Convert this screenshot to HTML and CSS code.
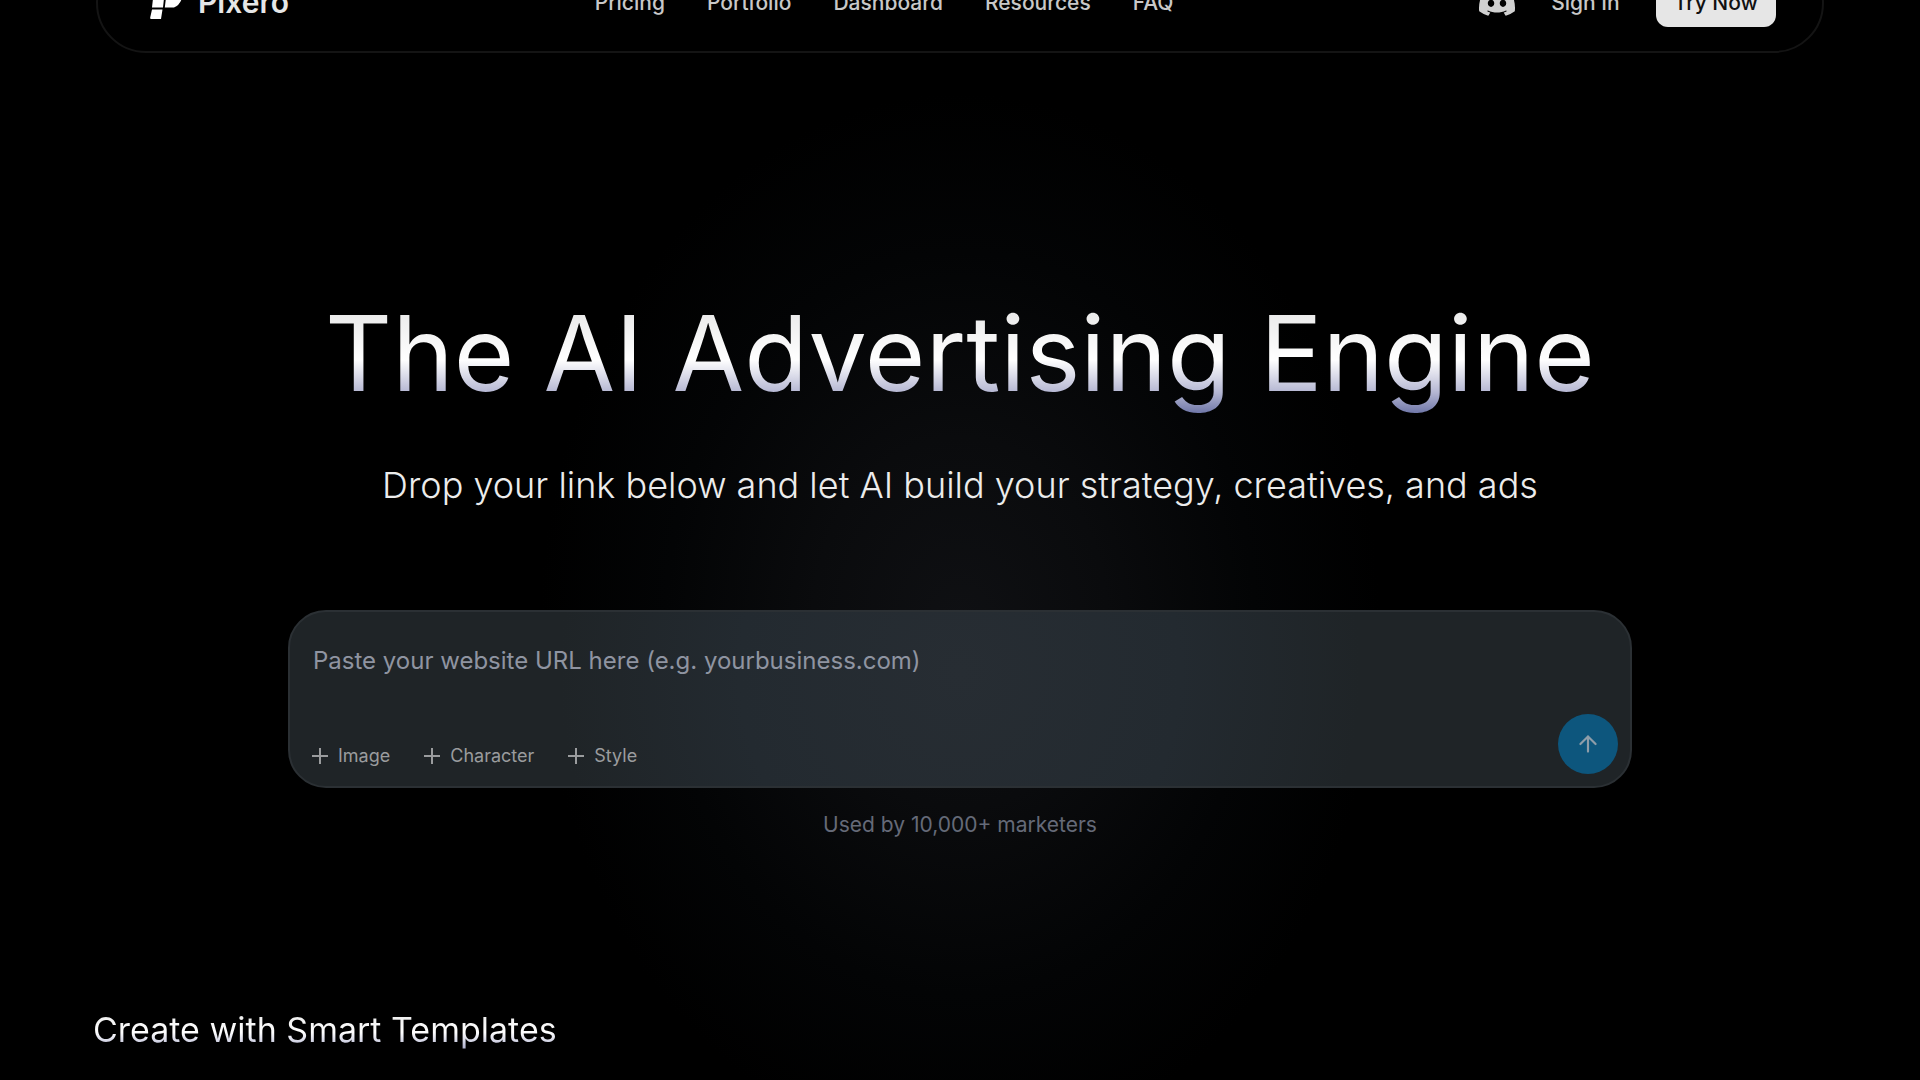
FILE: index.html
```html
<!DOCTYPE html>
<html lang="en">
<head>
    <meta charset="UTF-8">
    <meta name="viewport" content="width=device-width, initial-scale=1.0">
    <title>Pixero</title>
    <link rel="stylesheet" href="styles.css">
</head>
<body>
    <header class="navbar">
        <a class="logo" href="#">
            <svg class="logo-mark" viewBox="0 0 32 34" aria-hidden="true">
                <path d="M4.500 0H15.500L13 22.500H2Z M17.500 0H32V13Q30 20 24 22.500H14.800Z M2 24.500H12.500L11 34H1Q0 34 .2 32.500Z"/>
            </svg>
            <span>Pixero</span>
        </a>
        <nav class="nav-links">
            <a href="#">Pricing</a>
            <a href="#">Portfolio</a>
            <a href="#">Dashboard</a>
            <a href="#">Resources</a>
            <a href="#">FAQ</a>
        </nav>
        <div class="nav-actions">
            <a href="#" aria-label="Discord">
                <svg class="discord" viewBox="0 0 24 24" aria-hidden="true">
                    <path d="M20.317 4.370a19.791 19.791 0 0 0-4.885-1.515.074.074 0 0 0-.079.037c-.21.375-.444.864-.608 1.250a18.270 18.270 0 0 0-5.487 0 12.640 12.640 0 0 0-.617-1.250.077.077 0 0 0-.079-.037A19.736 19.736 0 0 0 3.677 4.370a.07.07 0 0 0-.032.027C.533 9.046-.32 13.580.099 18.057a.082.082 0 0 0 .031.057 19.900 19.900 0 0 0 5.993 3.030.078.078 0 0 0 .084-.028 14.090 14.090 0 0 0 1.226-1.994.076.076 0 0 0-.041-.106 13.107 13.107 0 0 1-1.872-.892.077.077 0 0 1-.008-.128 10.200 10.200 0 0 0 .372-.292.074.074 0 0 1 .077-.01c3.928 1.793 8.180 1.793 12.062 0a.074.074 0 0 1 .078.01c.12.098.246.198.373.292a.077.077 0 0 1-.006.127 12.299 12.299 0 0 1-1.873.892.077.077 0 0 0-.041.107c.36.698.772 1.362 1.225 1.993a.076.076 0 0 0 .084.028 19.839 19.839 0 0 0 6.002-3.030.077.077 0 0 0 .032-.054c.5-5.177-.838-9.674-3.549-13.660a.061.061 0 0 0-.031-.03zM8.020 15.330c-1.183 0-2.157-1.085-2.157-2.419 0-1.333.956-2.419 2.157-2.419 1.210 0 2.176 1.096 2.157 2.420 0 1.333-.956 2.418-2.157 2.418zm7.975 0c-1.183 0-2.157-1.085-2.157-2.419 0-1.333.955-2.419 2.157-2.419 1.210 0 2.176 1.096 2.157 2.420 0 1.333-.946 2.418-2.157 2.418z"/>
                </svg>
            </a>
            <a href="#">Sign In</a>
            <button class="try-btn" type="button">Try Now</button>
        </div>
    </header>

    <main>
        <section class="hero">
            <h1>The AI Advertising Engine</h1>
            <p class="subtitle">Drop your link below and let AI build your strategy, creatives, and ads</p>
            <form class="prompt">
                <input class="prompt-input" type="text" aria-label="Website URL" placeholder="Paste your website URL here (e.g. yourbusiness.com)">
                <div class="prompt-bar">
                    <div class="chips">
                        <button class="chip" type="button"><svg viewBox="0 0 16 16" aria-hidden="true"><path d="M8 0V16M0 8H16"/></svg>Image</button>
                        <button class="chip" type="button"><svg viewBox="0 0 16 16" aria-hidden="true"><path d="M8 0V16M0 8H16"/></svg>Character</button>
                        <button class="chip" type="button"><svg viewBox="0 0 16 16" aria-hidden="true"><path d="M8 0V16M0 8H16"/></svg>Style</button>
                    </div>
                    <button class="send-btn" type="button" aria-label="Generate">
                        <svg viewBox="0 0 24 24" aria-hidden="true"><path d="m5 12 7-7 7 7M12 19V5"/></svg>
                    </button>
                </div>
            </form>
            <p class="used-by">Used by 10,000+ marketers</p>
        </section>

        <section class="templates">
            <h2>Create with Smart Templates</h2>
        </section>
    </main>
</body>
</html>
```
FILE: styles.css
```css
* {
    box-sizing: border-box;
}

body {
    font-family: Inter, sans-serif;
    background: #000;
    color: #fff;
    margin: 0;
    padding: 0;
    overflow: hidden;
}

a {
    color: inherit;
    text-decoration: none;
}

button,
input {
    font-family: inherit;
}

/* the bar is tucked partly above the top edge */
.navbar {
    display: flex;
    align-items: center;
    justify-content: space-between;
    height: 100px;
    margin: -47px 5% 0;
    padding: 0 46px 2px 52px;
    border: 2px solid #141414;
    border-radius: 50px;
    color: #c8c8c8;
    font-size: 21px;
    font-weight: 500;
}

.logo {
    display: flex;
    align-items: center;
    gap: 16px;
    color: #e6e6e6;
    font-size: 30px;
    font-weight: 600;
}

.logo-mark {
    width: 32px;
    height: 34px;
    fill: #fff;
}

.nav-links {
    display: flex;
    gap: 42px;
}

.nav-actions {
    display: flex;
    align-items: center;
    gap: 36px;
}

.discord {
    display: block;
    width: 36px;
    height: 36px;
    fill: #d0d0d0;
}

.try-btn {
    height: 50px;
    padding: 0 18px;
    border: 0;
    border-radius: 12px;
    background: #e6e6e6;
    color: #111;
    font-size: 21px;
    font-weight: 500;
}

main {
    padding-bottom: 60px;
    background: radial-gradient(ellipse 420px 530px at 50% 570px, #0f1013 0%, #0a0b0d 35%, #030405 70%, #000 100%);
}

.hero {
    display: flex;
    flex-direction: column;
    align-items: center;
    padding: 234px 15% 0;
}

h1 {
    margin: 0;
    font-size: 104px;
    line-height: 132px;
    font-weight: 400;
    white-space: nowrap;
    background: linear-gradient(180deg, #e6e6e6 12%, #fff 55%, #b4b6d2 80%, #5c659c 100%);
    -webkit-background-clip: text;
    background-clip: text;
    color: transparent;
}

.subtitle {
    margin: 44px 0 0;
    color: #ececec;
    font-size: 36px;
    line-height: 44px;
    font-weight: 300;
    white-space: nowrap;
}

.prompt {
    width: 100%;
    margin-top: 103px;
    padding: 26px 12px 12px 22px;
    border: 2px solid #2b3034;
    border-radius: 38px;
    background: radial-gradient(ellipse 400px 420px at 50% 60px, #272d33 0%, #232a30 55%, #1f2427 100%);
}

.prompt-input {
    display: block;
    width: 100%;
    height: 44px;
    padding: 0 1px;
    border: 0;
    outline: 0;
    background: none;
    color: #fff;
    font-size: 24px;
}

.prompt-input::placeholder {
    color: #8f94a1;
    opacity: 1;
}

.prompt-bar {
    display: flex;
    justify-content: space-between;
    align-items: flex-end;
    margin-top: 32px;
}

.chips {
    display: flex;
    gap: 34px;
    padding-bottom: 6px;
}

.chip {
    display: flex;
    align-items: center;
    gap: 10px;
    padding: 0;
    border: 0;
    background: none;
    color: #9a9c9e;
    font-size: 18px;
    line-height: 24px;
}

.chip svg {
    width: 16px;
    height: 16px;
    fill: none;
    stroke: currentColor;
    stroke-width: 2;
}

.send-btn {
    display: flex;
    align-items: center;
    justify-content: center;
    width: 60px;
    height: 60px;
    padding: 0;
    border: 0;
    border-radius: 50%;
    background: #0d567d;
}

.send-btn svg {
    width: 26px;
    height: 26px;
    fill: none;
    stroke: #8e9da9;
    stroke-width: 2;
    stroke-linecap: round;
    stroke-linejoin: round;
}

.used-by {
    margin: 22px 0 0;
    color: #656a78;
    font-size: 21px;
    line-height: 30px;
}

.templates {
    padding: 168px 93px 0;
}

h2 {
    display: inline-block;
    margin: 0;
    font-size: 34px;
    line-height: 44px;
    font-weight: 400;
    background: linear-gradient(180deg, #e6e6e6 0%, #fff 55%, #b4b6d2 90%);
    -webkit-background-clip: text;
    background-clip: text;
    color: transparent;
}
```
